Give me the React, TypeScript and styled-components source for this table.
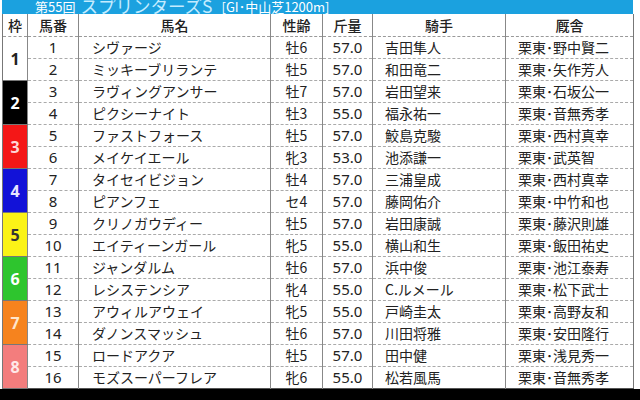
import React from "react";
import styled, { createGlobalStyle } from "styled-components";

const Global = createGlobalStyle`
  html, body { margin: 0; padding: 0; background: #fff; }
  body { font-family: "Noto Sans CJK JP", "Noto Sans", sans-serif; }
`;

const Page = styled.div`
  width: 640px;
  height: 400px;
  overflow: hidden;
  display: flex;
  flex-direction: column;
  background: #fff;
`;

const TitleBar = styled.div`
  height: 14px;
  margin: 0 7px 0 2px;
  background: #1ba1df;
  overflow: hidden;
  display: flex;
  align-items: flex-end;
  padding-left: 33px;
  color: #fff;
  line-height: 1;
`;

const Small = styled.span`
  font-size: 13px;
  margin-bottom: 1px;
`;

const Big = styled.span`
  font-size: 17.5px;
  color: #c4ecff;
  margin: 0 9px 0 5px;
  line-height: 0.9;
`;

const Table = styled.table`
  border-collapse: collapse;
  margin-left: 2px;
  width: 631px;
  table-layout: fixed;
  color: #222;
  font-size: 14px;
  border-left: 1px solid #777;
  border-right: 1px solid #777;
  border-bottom: 1px solid #555;
`;

const Th = styled.th`
  height: 22px;
  padding: 0;
  font-weight: 500;
  font-size: 14px;
  text-align: center;
  border-left: 1px solid #888;
  border-bottom: 1px dashed #999;
  line-height: 22px;
`;

const Tr = styled.tr`
  height: 22px;
`;

const Td = styled.td<{ $align?: string; $pad?: number }>`
  padding: 0 0 0 ${(p) => p.$pad ?? 0}px;
  text-align: ${(p) => p.$align ?? "center"};
  border-left: 1px solid #888;
  border-bottom: 1px dashed #aaa;
  line-height: 21px;
  white-space: nowrap;
  overflow: hidden;
`;

const Num = styled(Td)`
  font-family: "Noto Sans", sans-serif;
  font-size: 15px;
`;

const Waku = styled.td<{ $bg: string; $fg: string }>`
  padding: 0;
  background: ${(p) => p.$bg};
  color: ${(p) => p.$fg};
  text-align: center;
  font-family: "Noto Sans", sans-serif;
  font-weight: 700;
  font-size: 16px;
  border-bottom: 1px solid #777;
`;

const WAKU = [
  { bg: "#ffffff", fg: "#222" },
  { bg: "#000000", fg: "#fff" },
  { bg: "#f41717", fg: "#ffd6d6" },
  { bg: "#1212d8", fg: "#e6e6ff" },
  { bg: "#fbf317", fg: "#333" },
  { bg: "#2ec52e", fg: "#fff" },
  { bg: "#f6831e", fg: "#ffe6cc" },
  { bg: "#f37d7d", fg: "#ffe9e9" },
];

const horses = [
  ["シヴァージ", "牡6", "57.0", "吉田隼人", "栗東･野中賢二"],
  ["ミッキーブリランテ", "牡5", "57.0", "和田竜二", "栗東･矢作芳人"],
  ["ラヴィングアンサー", "牡7", "57.0", "岩田望来", "栗東･石坂公一"],
  ["ピクシーナイト", "牡3", "55.0", "福永祐一", "栗東･音無秀孝"],
  ["ファストフォース", "牡5", "57.0", "鮫島克駿", "栗東･西村真幸"],
  ["メイケイエール", "牝3", "53.0", "池添謙一", "栗東･武英智"],
  ["タイセイビジョン", "牡4", "57.0", "三浦皇成", "栗東･西村真幸"],
  ["ピアンフェ", "セ4", "57.0", "藤岡佑介", "栗東･中竹和也"],
  ["クリノガウディー", "牡5", "57.0", "岩田康誠", "栗東･藤沢則雄"],
  ["エイティーンガール", "牝5", "55.0", "横山和生", "栗東･飯田祐史"],
  ["ジャンダルム", "牡6", "57.0", "浜中俊", "栗東･池江泰寿"],
  ["レシステンシア", "牝4", "55.0", "C.ルメール", "栗東･松下武士"],
  ["アウィルアウェイ", "牝5", "55.0", "戸崎圭太", "栗東･高野友和"],
  ["ダノンスマッシュ", "牡6", "57.0", "川田将雅", "栗東･安田隆行"],
  ["ロードアクア", "牡5", "57.0", "田中健", "栗東･浅見秀一"],
  ["モズスーパーフレア", "牝6", "55.0", "松若風馬", "栗東･音無秀孝"],
];

const Footer = styled.div`
  flex: 1;
  background: #000;
`;

export default function App() {
  return (
    <Page>
      <Global />
      <TitleBar>
        <Small>第55回</Small>
        <Big>スプリンターズS</Big>
        <Small>[GI･中山芝1200m]</Small>
      </TitleBar>
      <Table>
        <colgroup>
          <col style={{ width: 25 }} />
          <col style={{ width: 51 }} />
          <col style={{ width: 192 }} />
          <col style={{ width: 52 }} />
          <col style={{ width: 50 }} />
          <col style={{ width: 133 }} />
          <col style={{ width: 128 }} />
        </colgroup>
        <thead>
          <tr>
            <Th style={{ borderLeft: "none" }}>枠</Th>
            <Th>馬番</Th>
            <Th>馬名</Th>
            <Th>性齢</Th>
            <Th>斤量</Th>
            <Th>騎手</Th>
            <Th>厩舎</Th>
          </tr>
        </thead>
        <tbody>
          {horses.map((h, i) => {
            const w = Math.floor(i / 2);
            return (
              <Tr key={i}>
                {i % 2 === 0 && (
                  <Waku rowSpan={2} $bg={WAKU[w].bg} $fg={WAKU[w].fg}>
                    {w + 1}
                  </Waku>
                )}
                <Num>{i + 1}</Num>
                <Td $align="left" $pad={13}>{h[0]}</Td>
                <Td>{h[1]}</Td>
                <Num>{h[2]}</Num>
                <Td $align="left" $pad={12}>{h[3]}</Td>
                <Td $align="left" $pad={12}>{h[4]}</Td>
              </Tr>
            );
          })}
        </tbody>
      </Table>
      <Footer />
    </Page>
  );
}
